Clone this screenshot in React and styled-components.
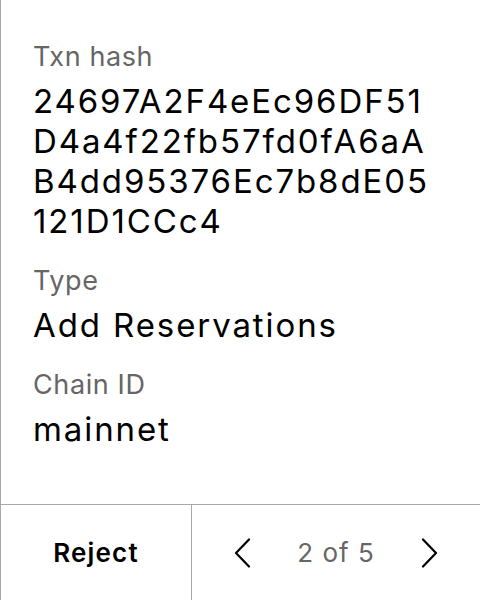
import React from "react";
import styled, { createGlobalStyle } from "styled-components";

const GlobalStyle = createGlobalStyle`
  html, body {
    margin: 0;
    padding: 0;
    background: #fff;
    font-family: Inter, "Noto Sans", sans-serif;
  }
`;

const Card = styled.div`
  box-sizing: border-box;
  width: 480px;
  height: 600px;
  display: flex;
  flex-direction: column;
  border-left: 1px solid #a8a8a8;
  background: #fff;
`;

const Details = styled.div`
  flex: 1;
  padding: 40px 20px 0 32px;
  display: flex;
  flex-direction: column;
  gap: 23px;
`;

const Field = styled.div`
  display: flex;
  flex-direction: column;
`;

const Label = styled.div`
  font-size: 27px;
  line-height: 34px;
  letter-spacing: 0.6px;
  color: #666;
  margin-bottom: 7px;
`;

const Value = styled.div`
  font-size: 33px;
  line-height: 40px;
  letter-spacing: 1.9px;
  color: #000;
  word-break: break-all;
  max-width: ${props => props.wrap || "none"};
`;

const Footer = styled.div`
  box-sizing: border-box;
  height: 96px;
  display: grid;
  grid-template-columns: 191px 1fr;
  border-top: 1px solid #a8a8a8;
`;

const RejectButton = styled.button`
  border: 0;
  border-right: 1px solid #a8a8a8;
  background: none;
  font-family: inherit;
  font-size: 26px;
  font-weight: 600;
  letter-spacing: 1.2px;
  color: #000;
  padding: 0;
`;

const Pager = styled.div`
  display: flex;
  align-items: center;
  justify-content: center;
  gap: 46px;
`;

const Arrow = styled.button`
  border: 0;
  background: none;
  padding: 0;
  display: flex;
  color: #000;
`;

const PageText = styled.span`
  font-size: 26px;
  letter-spacing: 1px;
  color: #666;
`;

function Chevron({ dir }) {
  const d = dir === "left" ? "M15 1.5 L2 15 L15 28.5" : "M2 1.5 L15 15 L2 28.5";
  return (
    <svg width="17" height="30" viewBox="0 0 17 30" fill="none">
      <path d={d} stroke="currentColor" strokeWidth="2.2" strokeLinecap="round" strokeLinejoin="round" />
    </svg>
  );
}

export default function App() {
  return (
    <>
      <GlobalStyle />
      <Card>
        <Details>
          <Field>
            <Label>Txn hash</Label>
            <Value wrap="402px">
              24697A2F4eEc96DF51D4a4f22fb57fd0fA6aAB4dd95376Ec7b8dE05121D1CCc4
            </Value>
          </Field>
          <Field>
            <Label>Type</Label>
            <Value>Add Reservations</Value>
          </Field>
          <Field>
            <Label>Chain ID</Label>
            <Value>mainnet</Value>
          </Field>
        </Details>
        <Footer>
          <RejectButton>Reject</RejectButton>
          <Pager>
            <Arrow aria-label="Previous"><Chevron dir="left" /></Arrow>
            <PageText>2 of 5</PageText>
            <Arrow aria-label="Next"><Chevron dir="right" /></Arrow>
          </Pager>
        </Footer>
      </Card>
    </>
  );
}
